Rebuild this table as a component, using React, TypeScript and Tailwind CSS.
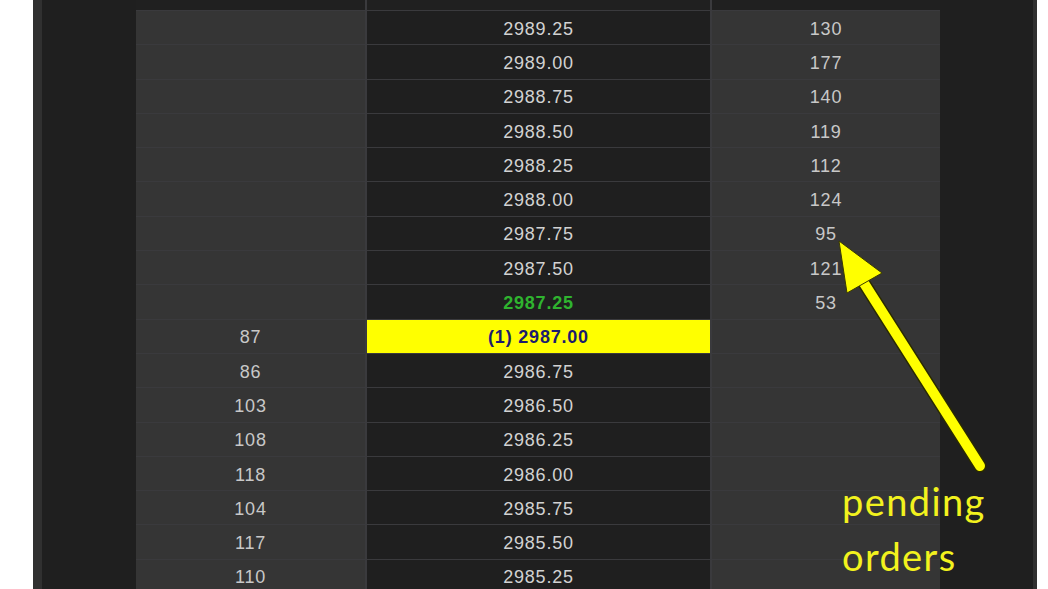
import React from "react";

const rows = [
  { bid: "", price: "2989.25", ask: "130" },
  { bid: "", price: "2989.00", ask: "177" },
  { bid: "", price: "2988.75", ask: "140" },
  { bid: "", price: "2988.50", ask: "119" },
  { bid: "", price: "2988.25", ask: "112" },
  { bid: "", price: "2988.00", ask: "124" },
  { bid: "", price: "2987.75", ask: "95" },
  { bid: "", price: "2987.50", ask: "121" },
  { bid: "", price: "2987.25", ask: "53", last: true },
  { bid: "87", price: "(1) 2987.00", ask: "", current: true },
  { bid: "86", price: "2986.75", ask: "" },
  { bid: "103", price: "2986.50", ask: "" },
  { bid: "108", price: "2986.25", ask: "" },
  { bid: "118", price: "2986.00", ask: "" },
  { bid: "104", price: "2985.75", ask: "" },
  { bid: "117", price: "2985.50", ask: "" },
  { bid: "110", price: "2985.25", ask: "" },
];

function PriceCell({ price, last, current }: { price: string; last?: boolean; current?: boolean }) {
  if (current) {
    return (
      <div className="flex items-center justify-center pt-[3px] bg-[#ffff00] text-[#1c1c6e] font-bold">
        {price}
      </div>
    );
  }
  return (
    <div
      className={
        last
          ? "flex items-center justify-center pt-[3px] bg-[#1f1f1f] text-[#2fb32f] font-bold"
          : "flex items-center justify-center pt-[3px] bg-[#1f1f1f] text-[#d2d2d2]"
      }
    >
      {price}
    </div>
  );
}

export default function App() {
  return (
    <div className="relative w-[1048px] h-[589px] bg-white overflow-hidden flex font-['Liberation_Sans',Arial,sans-serif]">
      <div className="ml-[33px] w-[1004px] h-full bg-[#1f1f1f] border-l-[9px] border-r-[4px] border-[#303030] pl-[94px]">
        <div className="grid grid-cols-[229px_343px_228px] grid-rows-[10px] auto-rows-[33.3px] gap-x-[2px] gap-y-px bg-[#3a3a3d] w-[804px] text-[18px] tracking-[0.8px]">
          <div className="bg-[#202020]" />
          <div className="bg-[#202020]" />
          <div className="bg-[#202020]" />
          {rows.map((r) => (
            <React.Fragment key={r.price}>
              <div className="flex items-center justify-center pt-[3px] bg-[#353535] text-[#c8c8c8]">{r.bid}</div>
              <PriceCell price={r.price} last={r.last} current={r.current} />
              <div className="flex items-center justify-center pt-[3px] bg-[#353535] text-[#c8c8c8]">{r.ask}</div>
            </React.Fragment>
          ))}
        </div>
      </div>

      {/* annotation arrow */}
      <svg className="absolute left-0 top-0" width="1048" height="589" viewBox="0 0 1048 589">
        <line x1="980" y1="466" x2="862" y2="280" stroke="#2a2a00" strokeWidth="13" strokeLinecap="round" />
        <line x1="980" y1="466" x2="862" y2="280" stroke="#ffff00" strokeWidth="10" strokeLinecap="round" />
        <polygon points="839,241 882,273 847,293" fill="#ffff00" stroke="#3a3a00" strokeWidth="1" strokeLinejoin="round" />
      </svg>

      <div className="absolute left-[842px] top-[474px] text-[#f2f21e] text-[38px] leading-[55px] tracking-[1.4px] font-['Lato',sans-serif]">
        <div>pending</div>
        <div>orders</div>
      </div>
    </div>
  );
}
